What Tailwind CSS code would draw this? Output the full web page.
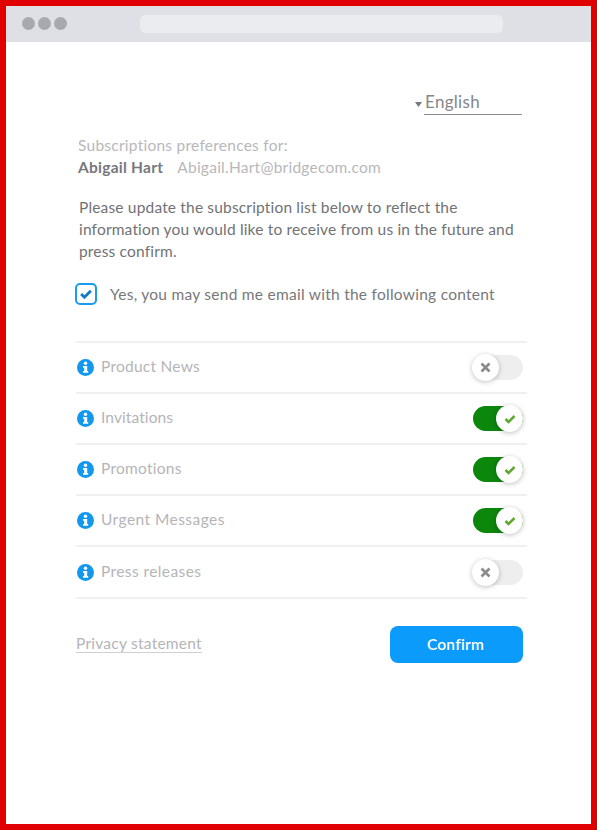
<!DOCTYPE html>
<html lang="en">
<head>
    <meta charset="UTF-8">
    <meta name="viewport" content="width=device-width, initial-scale=1.0">
    <title>Subscription preferences</title>
    <script src="https://cdn.jsdelivr.net/npm/@tailwindcss/browser@4"></script>
</head>
<body class="bg-white font-['Lato',sans-serif]">
    <div class="w-[597px] h-[830px] border-[6px] border-[#e00000] bg-white flex flex-col overflow-hidden">
        <!-- browser bar -->
        <div class="h-9 shrink-0 bg-[#dfe0e6] flex items-center pl-[16px] pb-[1px]">
            <div class="flex gap-[3px]">
                <span class="w-[13px] h-[13px] rounded-full bg-[#a7a8b0]"></span>
                <span class="w-[13px] h-[13px] rounded-full bg-[#a7a8b0]"></span>
                <span class="w-[13px] h-[13px] rounded-full bg-[#a7a8b0]"></span>
            </div>
            <div class="ml-[73px] w-[363px] h-[18px] rounded-md bg-[#ebecf0]"></div>
        </div>

        <div class="flex flex-col pl-[70px] pr-[64px]">
            <!-- language -->
            <div class="flex justify-end items-end mt-[48px] mr-[5px]">
                <svg class="w-[7px] h-[5px] mb-[8px] mr-[2px]" viewBox="0 0 7 5"><path d="M0 0h7L3.500 5z" fill="#77787c"/></svg>
                <div class="w-[98px] h-[25px] border-b border-[#8c8c8c] pl-[1px] text-[17px] leading-[23px] text-[#85868a] tracking-[0.3px]">English</div>
            </div>

            <p class="ml-[2px] mt-[19px] text-[15.5px] leading-[22px] text-[#b8b8ba] tracking-[0.25px]">Subscriptions preferences for:</p>
            <p class="ml-[2px] text-[15.5px] leading-[22px] text-[#b8b8ba] tracking-[0.25px]"><b class="font-bold text-[#77787b] mr-[14px]">Abigail Hart</b>Abigail.Hart@bridgecom.com</p>

            <p class="ml-[3px] mt-[18px] text-[15.5px] leading-[22px] text-[#717275] tracking-[0.17px] whitespace-nowrap">Please update the subscription list below to reflect the<br>information you would like to receive from us in the future and<br>press confirm.</p>

            <div class="flex items-center mt-[21px] -ml-px">
                <span class="w-[22px] h-[22px] rounded-[5px] border-2 border-[#1a9bf0] flex items-center justify-center">
                    <svg class="w-[14px] h-[12px]" viewBox="0 0 13 11"><path d="M2 5.500l3 3 6-6" fill="none" stroke="#1678c8" stroke-width="2.600"/></svg>
                </span>
                <span class="ml-[13px] text-[15.5px] leading-[22px] text-[#77787b] tracking-[0.26px] whitespace-nowrap">Yes, you may send me email with the following content</span>
            </div>

            <!-- list -->
            <ul class="mt-[36px] border-t-2 border-[#f0f0f1]">
                <li class="h-[51px] flex items-center border-b-2 border-[#f0f0f1] pl-px pr-[4px]">
                    <svg class="w-[17px] h-[17px] shrink-0" viewBox="0 0 17 17"><circle cx="8.500" cy="8.500" r="8.500" fill="#1398ee"/><circle cx="8.500" cy="4.200" r="1.700" fill="#fff"/><path d="M6 7h4.200v5h1v1.800H6V12h1.200V8.800H6z" fill="#fff"/></svg>
                    <span class="ml-[7px] -mt-px text-[15.5px] text-[#b4b5b7] tracking-[0.25px]">Product News</span>
                    <span class="ml-auto relative w-[50px] h-[25px] rounded-full bg-[#eeeeef]">
                        <span class="absolute -left-px -top-[1px] w-[27px] h-[27px] rounded-full bg-white shadow-[0_1px_5px_rgba(0,0,0,0.25)] flex items-center justify-center">
                            <svg class="w-[11px] h-[11px]" viewBox="0 0 11 11"><path d="M1.500 1.500l8 8M9.500 1.500l-8 8" stroke="#8a8b8e" stroke-width="2.600"/></svg>
                        </span>
                    </span>
                </li>
                <li class="h-[51px] flex items-center border-b-2 border-[#f0f0f1] pl-px pr-[4px]">
                    <svg class="w-[17px] h-[17px] shrink-0" viewBox="0 0 17 17"><circle cx="8.500" cy="8.500" r="8.500" fill="#1398ee"/><circle cx="8.500" cy="4.200" r="1.700" fill="#fff"/><path d="M6 7h4.200v5h1v1.800H6V12h1.200V8.800H6z" fill="#fff"/></svg>
                    <span class="ml-[7px] -mt-px text-[15.5px] text-[#b4b5b7] tracking-[0.1px]">Invitations</span>
                    <span class="ml-auto relative w-[50px] h-[25px] rounded-full bg-[#0b870b]">
                        <span class="absolute right-0 -top-[1px] w-[27px] h-[27px] rounded-full bg-white shadow-[0_1px_5px_rgba(0,0,0,0.25)] flex items-center justify-center">
                            <svg class="w-[12px] h-[10px]" viewBox="0 0 12 10"><path d="M1.500 5l3 3 6-6" fill="none" stroke="#5fa82e" stroke-width="2.500"/></svg>
                        </span>
                    </span>
                </li>
                <li class="h-[51px] flex items-center border-b-2 border-[#f0f0f1] pl-px pr-[4px]">
                    <svg class="w-[17px] h-[17px] shrink-0" viewBox="0 0 17 17"><circle cx="8.500" cy="8.500" r="8.500" fill="#1398ee"/><circle cx="8.500" cy="4.200" r="1.700" fill="#fff"/><path d="M6 7h4.200v5h1v1.800H6V12h1.200V8.800H6z" fill="#fff"/></svg>
                    <span class="ml-[7px] -mt-px text-[15.5px] text-[#b4b5b7] tracking-[0.25px]">Promotions</span>
                    <span class="ml-auto relative w-[50px] h-[25px] rounded-full bg-[#0b870b]">
                        <span class="absolute right-0 -top-[1px] w-[27px] h-[27px] rounded-full bg-white shadow-[0_1px_5px_rgba(0,0,0,0.25)] flex items-center justify-center">
                            <svg class="w-[12px] h-[10px]" viewBox="0 0 12 10"><path d="M1.500 5l3 3 6-6" fill="none" stroke="#5fa82e" stroke-width="2.500"/></svg>
                        </span>
                    </span>
                </li>
                <li class="h-[51px] flex items-center border-b-2 border-[#f0f0f1] pl-px pr-[4px]">
                    <svg class="w-[17px] h-[17px] shrink-0" viewBox="0 0 17 17"><circle cx="8.500" cy="8.500" r="8.500" fill="#1398ee"/><circle cx="8.500" cy="4.200" r="1.700" fill="#fff"/><path d="M6 7h4.200v5h1v1.800H6V12h1.200V8.800H6z" fill="#fff"/></svg>
                    <span class="ml-[7px] -mt-px text-[15.5px] text-[#b4b5b7] tracking-[0.45px]">Urgent Messages</span>
                    <span class="ml-auto relative w-[50px] h-[25px] rounded-full bg-[#0b870b]">
                        <span class="absolute right-0 -top-[1px] w-[27px] h-[27px] rounded-full bg-white shadow-[0_1px_5px_rgba(0,0,0,0.25)] flex items-center justify-center">
                            <svg class="w-[12px] h-[10px]" viewBox="0 0 12 10"><path d="M1.500 5l3 3 6-6" fill="none" stroke="#5fa82e" stroke-width="2.500"/></svg>
                        </span>
                    </span>
                </li>
                <li class="h-[52px] flex items-center border-b-2 border-[#f0f0f1] pl-px pr-[4px]">
                    <svg class="w-[17px] h-[17px] shrink-0" viewBox="0 0 17 17"><circle cx="8.500" cy="8.500" r="8.500" fill="#1398ee"/><circle cx="8.500" cy="4.200" r="1.700" fill="#fff"/><path d="M6 7h4.200v5h1v1.800H6V12h1.200V8.800H6z" fill="#fff"/></svg>
                    <span class="ml-[7px] -mt-px text-[15.5px] text-[#b4b5b7] tracking-[0.4px]">Press releases</span>
                    <span class="ml-auto relative w-[50px] h-[25px] rounded-full bg-[#eeeeef]">
                        <span class="absolute -left-px -top-[1px] w-[27px] h-[27px] rounded-full bg-white shadow-[0_1px_5px_rgba(0,0,0,0.25)] flex items-center justify-center">
                            <svg class="w-[11px] h-[11px]" viewBox="0 0 11 11"><path d="M1.500 1.500l8 8M9.500 1.500l-8 8" stroke="#8a8b8e" stroke-width="2.600"/></svg>
                        </span>
                    </span>
                </li>
            </ul>

            <!-- footer -->
            <div class="flex items-center justify-between mt-[27px] pr-[4px]">
                <a href="#" class="-mt-[2px] text-[15.5px] text-[#b4b5b7] tracking-[0.25px] border-b border-[#d0d0d2] leading-[17px]">Privacy statement</a>
                <button class="w-[133px] h-[37px] pr-[2px] rounded-lg bg-[#0b9bfb] text-white text-[15.5px] font-semibold tracking-[0.25px]">Confirm</button>
            </div>
        </div>
    </div>
</body>
</html>
